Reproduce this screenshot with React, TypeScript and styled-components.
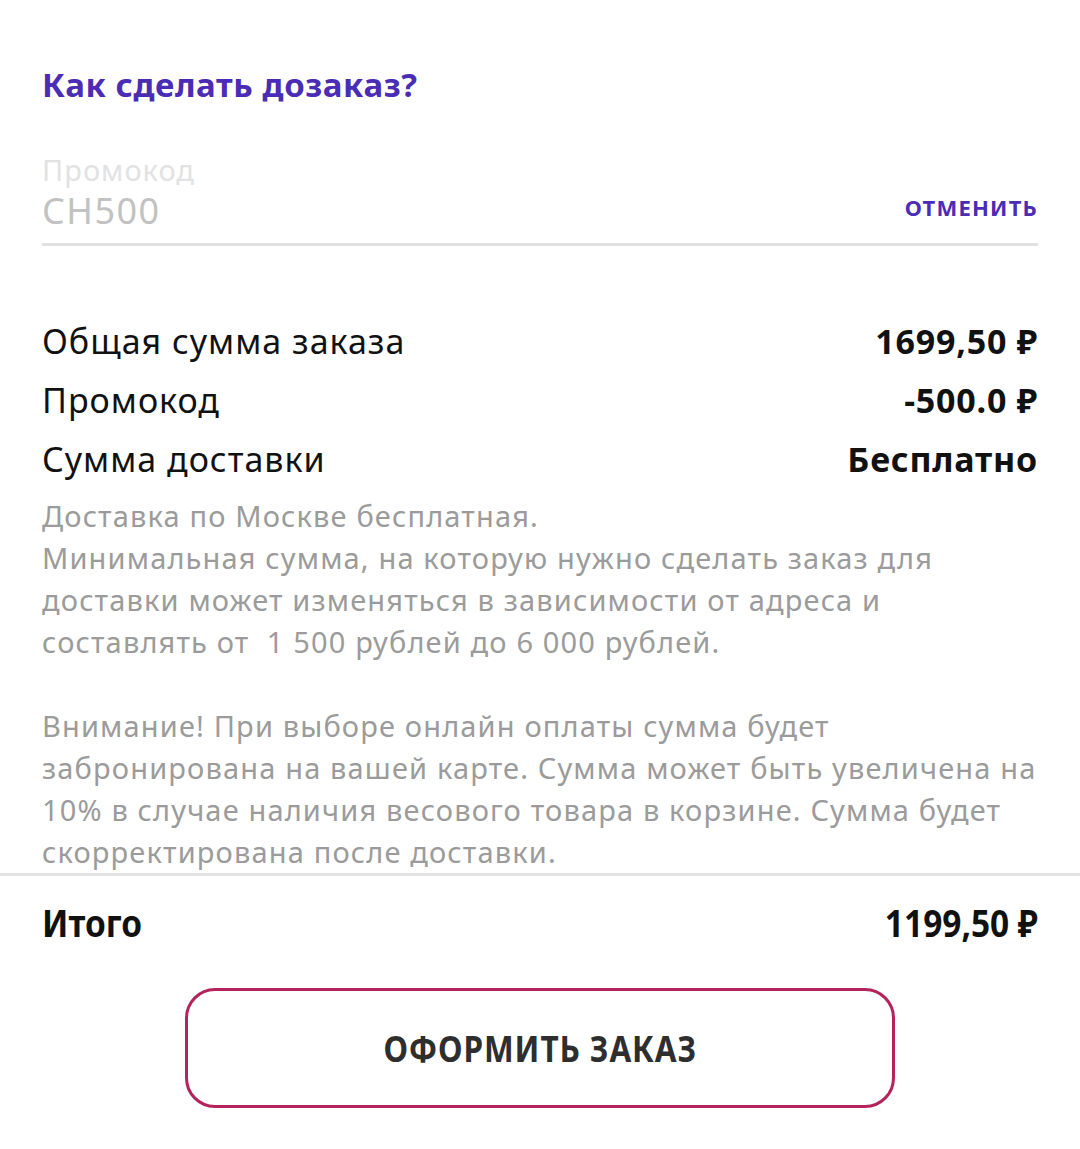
import styled, { createGlobalStyle } from "styled-components";

const GlobalStyle = createGlobalStyle`
  body {
    margin: 0;
    background: #ffffff;
    font-family: "Noto Sans", "DejaVu Sans", sans-serif;
  }
`;

const rows = [
  { label: "Общая сумма заказа", value: "1699,50 ₽" },
  { label: "Промокод", value: "-500.0 ₽" },
  { label: "Сумма доставки", value: "Бесплатно" },
];

const deliveryNote = [
  "Доставка по Москве бесплатная.",
  "Минимальная сумма, на которую нужно сделать заказ для",
  "доставки может изменяться в зависимости от адреса и",
  "составлять от\u00a0 1 500 рублей до 6 000 рублей.",
];

const paymentNote = [
  "Внимание! При выборе онлайн оплаты сумма будет",
  "забронирована на вашей карте. Сумма может быть увеличена на",
  "10% в случае наличия весового товара в корзине. Сумма будет",
  "скорректирована после доставки.",
];

export default function App() {
  return (
    <>
      <GlobalStyle />
      <Page>
        <Content>
          <HelpLink>Как сделать дозаказ?</HelpLink>
          <PromoField>
            <PromoInput>
              <PromoLabel>Промокод</PromoLabel>
              <PromoValue>CH500</PromoValue>
            </PromoInput>
            <CancelButton>ОТМЕНИТЬ</CancelButton>
          </PromoField>
          <Summary>
            {rows.map((r) => (
              <SummaryRow key={r.label}>
                <span>{r.label}</span>
                <Value>{r.value}</Value>
              </SummaryRow>
            ))}
          </Summary>
          <Note>
            {deliveryNote.map((line) => (
              <NoteLine key={line}>{line}</NoteLine>
            ))}
            <NoteLine>&nbsp;</NoteLine>
            {paymentNote.map((line) => (
              <NoteLine key={line}>{line}</NoteLine>
            ))}
          </Note>
        </Content>
        <Divider />
        <Content>
          <TotalRow>
            <TotalText $origin="left">Итого</TotalText>
            <TotalText $origin="right">1199,50 ₽</TotalText>
          </TotalRow>
          <ButtonWrap>
            <SubmitButton>
              <ButtonLabel>ОФОРМИТЬ ЗАКАЗ</ButtonLabel>
            </SubmitButton>
          </ButtonWrap>
        </Content>
      </Page>
    </>
  );
}

const Page = styled.div`
  width: 1080px;
  height: 1149px;
  padding-top: 58px;
  box-sizing: border-box;
  overflow: hidden;
`;

const Content = styled.div`
  padding: 0 42px;
`;

const HelpLink = styled.div`
  color: #4a2db4;
  font-size: 33px;
  font-weight: 700;
  letter-spacing: 0.6px;
  line-height: 54px;
`;

const PromoField = styled.div`
  display: flex;
  align-items: flex-end;
  justify-content: space-between;
  margin-top: 40px;
  border-bottom: 3px solid #e0e0e0;
  padding-bottom: 9px;
`;

const PromoInput = styled.div`
  display: flex;
  flex-direction: column;
`;

const PromoLabel = styled.span`
  color: #e2e2e2;
  font-size: 29px;
  letter-spacing: 1px;
  line-height: 36px;
`;

const PromoValue = styled.span`
  color: #c2c2c2;
  font-size: 36px;
  letter-spacing: 1.5px;
  line-height: 46px;
`;

const CancelButton = styled.span`
  color: #4a2db4;
  font-size: 22px;
  font-weight: 700;
  letter-spacing: 1.2px;
  margin-bottom: 12px;
`;

const Summary = styled.div`
  margin-top: 66px;
  display: flex;
  flex-direction: column;
`;

const SummaryRow = styled.div`
  display: flex;
  justify-content: space-between;
  align-items: center;
  font-size: 34px;
  letter-spacing: 1px;
  line-height: 59px;
  color: #111;
`;

const Value = styled.span`
  font-weight: 700;
  letter-spacing: 0.8px;
`;

const Note = styled.div`
  color: #9b9b9b;
  font-size: 29px;
  letter-spacing: 1.15px;
  line-height: 42px;
  margin-top: 6px;
`;

const NoteLine = styled.div`
  white-space: nowrap;
`;

const Divider = styled.div`
  height: 3px;
  background: #e3e3e3;
`;

const TotalRow = styled.div`
  display: flex;
  justify-content: space-between;
  align-items: center;
  height: 92px;
  color: #111;
`;

const TotalText = styled.span<{ $origin: "left" | "right" }>`
  display: inline-block;
  font-size: 38px;
  font-weight: 700;
  transform: scaleX(0.88);
  transform-origin: ${(p) => p.$origin} center;
`;

const ButtonWrap = styled.div`
  display: flex;
  justify-content: center;
  margin-top: 20px;
`;

const SubmitButton = styled.button`
  width: 710px;
  height: 120px;
  border: 3px solid #b3245c;
  border-radius: 30px;
  background: #fff;
  box-sizing: border-box;
  display: flex;
  align-items: center;
  justify-content: center;
`;

const ButtonLabel = styled.span`
  display: inline-block;
  color: #2e2e2e;
  font-family: "Noto Sans", "DejaVu Sans", sans-serif;
  font-size: 35px;
  font-weight: 700;
  letter-spacing: 1px;
  transform: scaleX(0.9);
`;
